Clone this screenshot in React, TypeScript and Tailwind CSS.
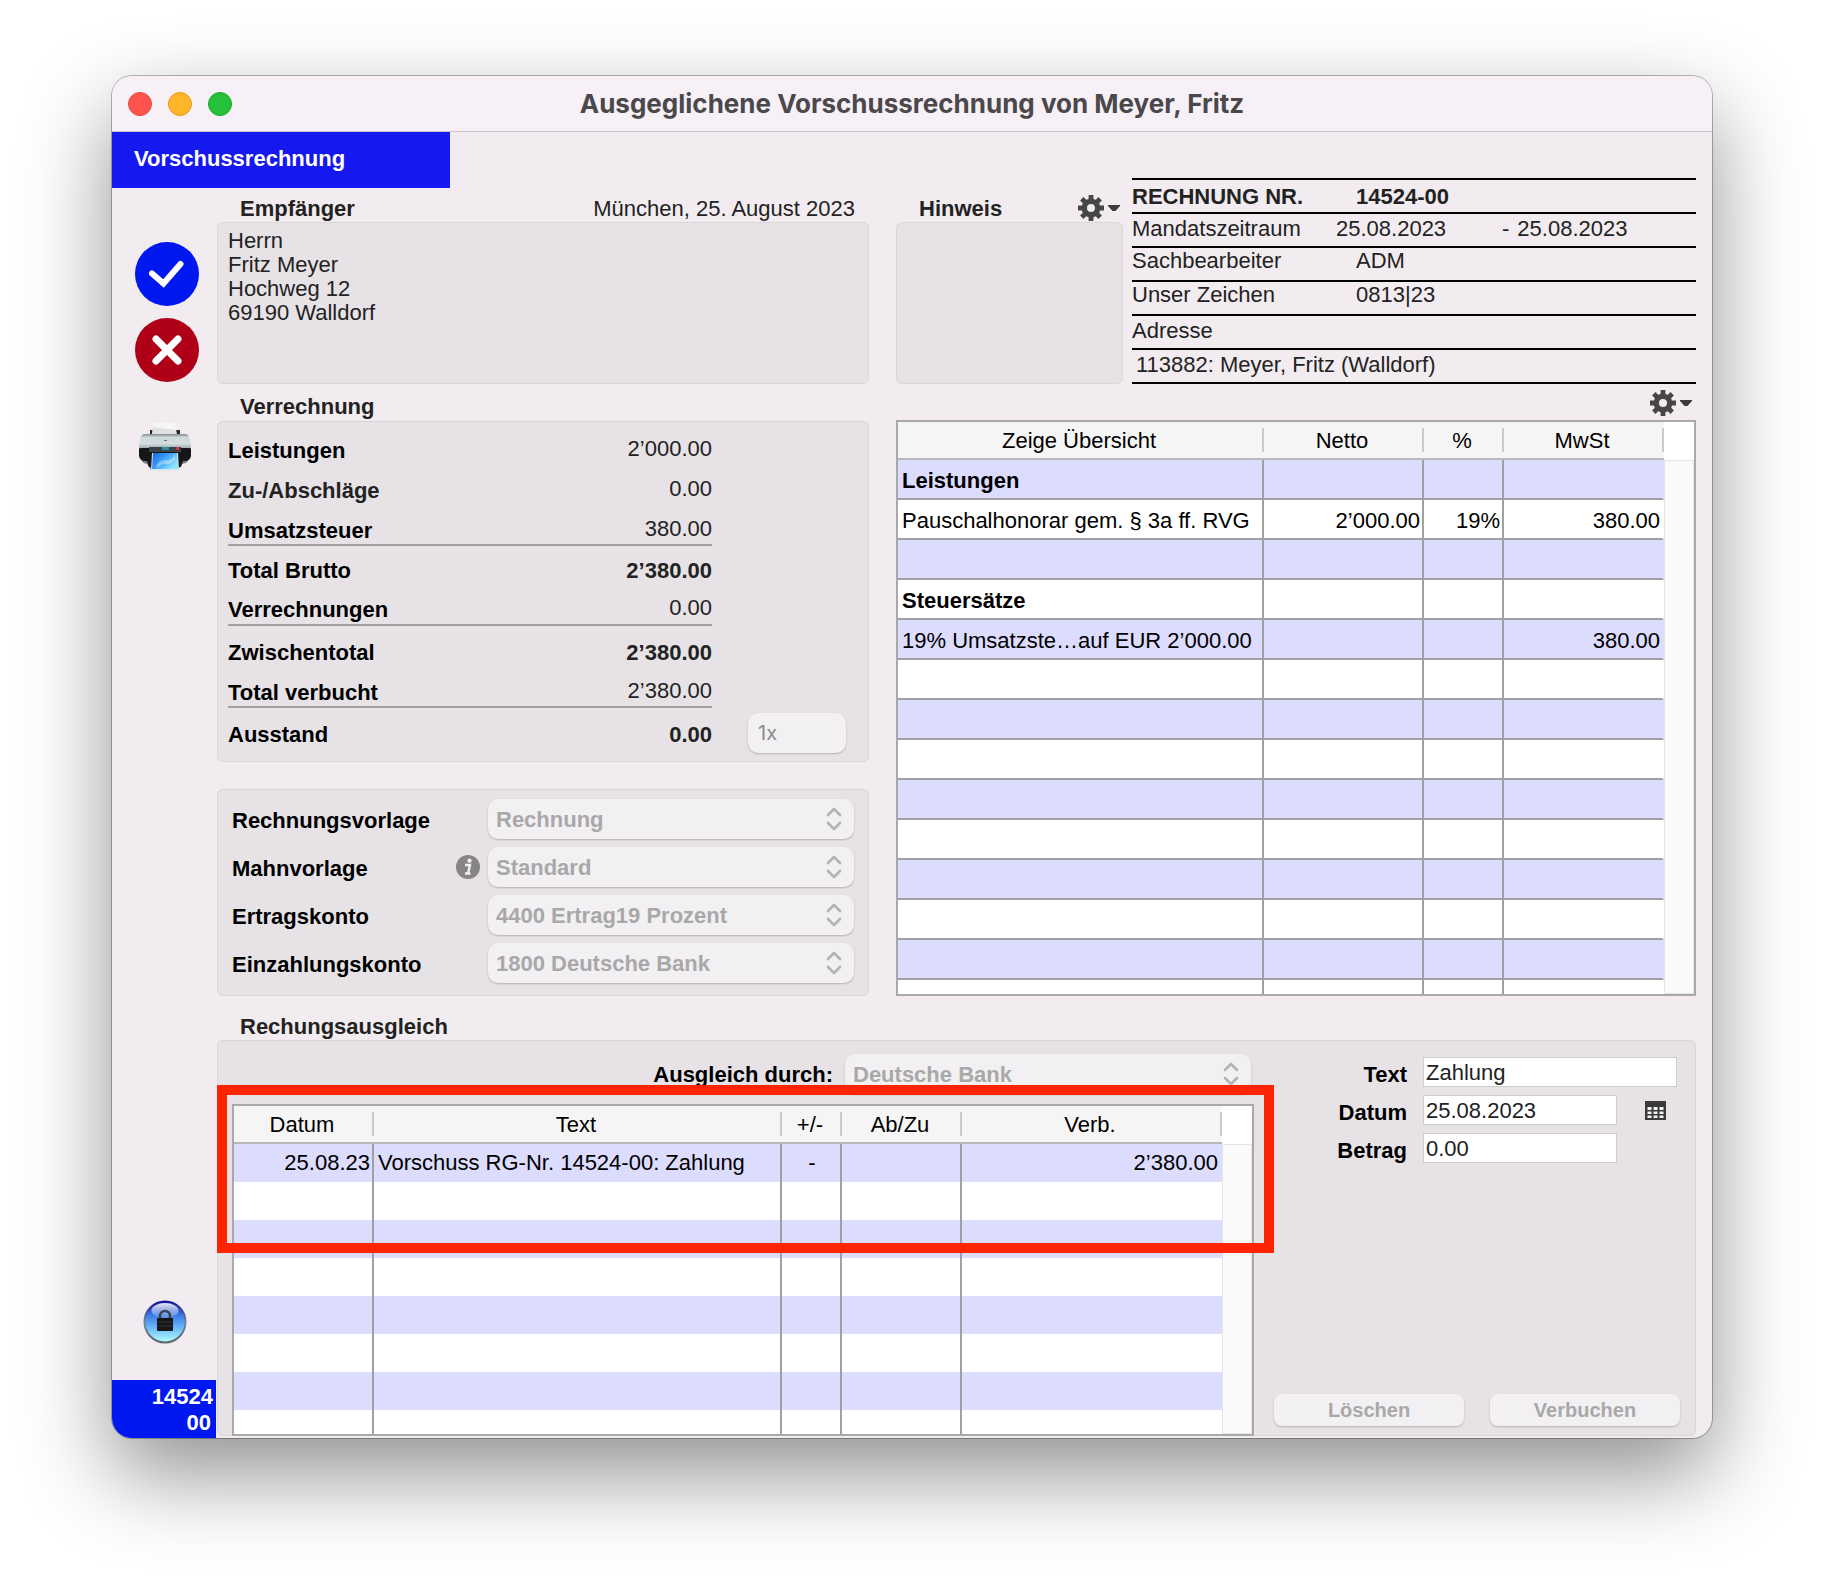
import type { ReactNode } from 'react';
import { clsx } from 'clsx';

interface Column {
  label: string;
  width?: string;
  align: string;
}

interface Row {
  cells: string[];
  bold?: boolean;
}

const overviewColumns: Column[] = [
  { label: 'Zeige Übersicht', align: 'text-left' },
  { label: 'Netto', width: 'w-[160px]', align: 'text-right' },
  { label: '%', width: 'w-[80px]', align: 'text-right' },
  { label: 'MwSt', width: 'w-[160px]', align: 'text-right' },
];

const overviewRows: Row[] = [
  { cells: ['Leistungen', '', '', ''], bold: true },
  { cells: ['Pauschalhonorar gem. § 3a ff. RVG', '2’000.00', '19%', '380.00'] },
  { cells: ['', '', '', ''] },
  { cells: ['Steuersätze', '', '', ''], bold: true },
  { cells: ['19% Umsatzste…auf EUR 2’000.00', '', '', '380.00'] },
];

const paymentColumns: Column[] = [
  { label: 'Datum', width: 'w-[140px]', align: 'text-right' },
  { label: 'Text', align: 'text-left' },
  { label: '+/-', width: 'w-[60px]', align: 'text-center' },
  { label: 'Ab/Zu', width: 'w-[120px]', align: 'text-right' },
  { label: 'Verb.', width: 'w-[260px]', align: 'text-right' },
];

const paymentRows: Row[] = [
  { cells: ['25.08.23', 'Vorschuss RG-Nr. 14524-00: Zahlung', '-', '', '2’380.00'] },
];

const totals = [
  { label: 'Leistungen', value: '2’000.00', row: 'h-10 pt-[9px]' },
  { label: 'Zu-/Abschläge', value: '0.00', row: 'h-10 pt-[9px]', muted: true },
  { label: 'Umsatzsteuer', value: '380.00', row: 'h-9 pt-[9px] border-b-2' },
  { label: 'Total Brutto', value: '2’380.00', row: 'h-11 pt-[13px]', total: true },
  { label: 'Verrechnungen', value: '0.00', row: 'h-9 pt-2 border-b-2' },
  { label: 'Zwischentotal', value: '2’380.00', row: 'h-[46px] pt-[15px]', total: true },
  { label: 'Total verbucht', value: '2’380.00', row: 'h-9 pt-[9px] border-b-2' },
  { label: 'Ausstand', value: '0.00', row: 'h-[45px] pt-[15px]', total: true },
];

const settings = [
  { id: 'rechnungsvorlage', label: 'Rechnungsvorlage', value: 'Rechnung' },
  { id: 'mahnvorlage', label: 'Mahnvorlage', value: 'Standard', info: true },
  { id: 'ertragskonto', label: 'Ertragskonto', value: '4400 Ertrag19 Prozent' },
  { id: 'einzahlungskonto', label: 'Einzahlungskonto', value: '1800 Deutsche Bank' },
];

function CheckIcon() {
  return (
    <svg className="block h-16 w-16" viewBox="0 0 64 64">
      <circle cx="32" cy="32" r="32" fill="#0018f0" />
      <path d="M17 31.500 L28.500 41.500 L45.500 22" fill="none" stroke="#fff" strokeWidth="6" strokeLinecap="round" />
    </svg>
  );
}

function CrossIcon() {
  return (
    <svg className="block h-16 w-16" viewBox="0 0 64 64">
      <circle cx="32" cy="32" r="32" fill="#b00018" />
      <path d="M21 21 L43 43 M43 21 L21 43" fill="none" stroke="#fff" strokeWidth="7" strokeLinecap="round" />
    </svg>
  );
}

function PrinterIcon() {
  return (
    <svg className="block h-[50px] w-[54px]" viewBox="0 0 54 50">
      <defs>
        <linearGradient id="printer-body" x1="0" y1="0" x2="0" y2="1">
          <stop offset="0" stopColor="#7d888c" />
          <stop offset="0.2" stopColor="#cfd9dc" />
          <stop offset="0.6" stopColor="#d3dcdf" />
          <stop offset="1" stopColor="#8d999e" />
        </linearGradient>
        <linearGradient id="printer-photo" x1="0" y1="0" x2="1" y2="0.6">
          <stop offset="0" stopColor="#0f66dd" />
          <stop offset="0.5" stopColor="#3f9ffb" />
          <stop offset="1" stopColor="#8fe6fb" />
        </linearGradient>
      </defs>
      <path d="M12 8h4v7h-4z M38 8h4v7h-4z" fill="#26292b" />
      <path d="M15 1h22l2 12H14z" fill="#f6f6f6" />
      <path d="M15 5l23 3v5H15z" fill="#dfe1e2" />
      <path d="M2 34h50q-1 7-8 8l-4 6H13l-4-6q-6-1-7-8z" fill="#7a8082" />
      <path d="M4 13q1-1 3-1h40q2 0 3 1 3 4 3 15H1q0-11 3-15z" fill="url(#printer-body)" />
      <path d="M1 27q0-1 2-1h48q2 0 2 1v7q-1 5-6 5h-2l-2 6h-3V31H14v14h-3l-2-6H7q-5 0-6-5z" fill="#141618" />
      <path d="M11 25h32v5H11z" fill="#3a4247" />
      <path d="M24 25h7v3h-7z" fill="#2c8da6" />
      <path d="M38 25h3v3h-3z" fill="#d5304a" />
      <path d="M26 18h3v1h-3z" fill="#6c777c" />
      <path d="M14 31h26l1 18H13z" fill="#dfe8ea" />
      <path d="M15 31h24l1 16H14z" fill="url(#printer-photo)" />
      <path d="M18 44q4-7 10-6t9-5v4q-4 6-9 5t-8 4z" fill="#fff" opacity="0.35" />
    </svg>
  );
}

function LockIcon() {
  return (
    <svg className="block h-11 w-11" viewBox="0 0 44 44">
      <defs>
        <linearGradient id="lock-ball" x1="0" y1="0" x2="0" y2="1">
          <stop offset="0" stopColor="#0d0f9c" />
          <stop offset="0.25" stopColor="#2f67dd" />
          <stop offset="0.6" stopColor="#62b2fb" />
          <stop offset="1" stopColor="#b6fffb" />
        </linearGradient>
        <linearGradient id="lock-shine" x1="0" y1="0" x2="0" y2="1">
          <stop offset="0" stopColor="#fff" stopOpacity="0.9" />
          <stop offset="1" stopColor="#fff" stopOpacity="0.1" />
        </linearGradient>
        <linearGradient id="lock-rim" x1="0" y1="0" x2="0" y2="1">
          <stop offset="0" stopColor="#14149c" />
          <stop offset="0.5" stopColor="#6f87a0" />
          <stop offset="1" stopColor="#5d686a" />
        </linearGradient>
      </defs>
      <circle cx="22" cy="22" r="20.500" fill="url(#lock-ball)" stroke="url(#lock-rim)" strokeWidth="2" />
      <ellipse cx="22" cy="10.500" rx="13.500" ry="7.500" fill="url(#lock-shine)" />
      <path d="M17 19v-3a5 5 0 0 1 10 0v3" fill="none" stroke="#3b4650" strokeWidth="2.600" />
      <rect x="14" y="18" width="16" height="13" rx="1" fill="#151719" />
      <path d="M15 22h14M15 26h14" stroke="#34383c" strokeWidth="1" />
    </svg>
  );
}

function GearMenu({ label }: { label: string }) {
  return (
    <button type="button" aria-label={label} className="flex h-[26px] items-center gap-1">
      <svg className="h-[26px] w-[26px]" viewBox="0 0 26 26" fill="none" stroke="#464646">
        <circle cx="13" cy="13" r="6.700" strokeWidth="5.400" />
        <g strokeWidth="4.800">
          <path d="M13 0v5M13 21v5M0 13h5M21 13h5" />
          <path d="M3.800 3.800l3.500 3.500M18.700 18.700l3.500 3.500M3.800 22.200l3.500-3.500M18.700 7.300l3.500-3.500" />
        </g>
      </svg>
      <svg className="h-[6px] w-3" viewBox="0 0 12 6">
        <path d="M0 0h12v1L7.500 6h-3L0 1z" fill="#3c3c3c" />
      </svg>
    </button>
  );
}

function InfoIcon() {
  return (
    <svg className="block h-6 w-6" viewBox="0 0 24 24">
      <circle cx="12" cy="12" r="12" fill="#868486" />
      <circle cx="13.500" cy="5.600" r="2.200" fill="#f1eff1" />
      <path d="M9 10h5l-2 8.500h2.500M9 18.500h3" fill="none" stroke="#f1eff1" strokeWidth="2.400" />
    </svg>
  );
}

function CalendarIcon() {
  return (
    <svg className="block h-[19px] w-[21px]" viewBox="0 0 21 19">
      <path d="M0 0h21v19H0z" fill="#3a3a3a" />
      <path
        d="M2.500 6h4v3h-4zM8.500 6h4v3h-4zM14.500 6h4v3h-4zM2.500 10.500h4v2.500h-4zM8.500 10.500h4v2.500h-4zM14.500 10.500h4v2.500h-4zM2.500 14.500h4v2.500h-4zM8.500 14.500h4v2.500h-4zM14.500 14.500h4v2.500h-4z"
        fill="#f4f2f4"
      />
    </svg>
  );
}

function PopupSelect({ id, value, className }: { id: string; value: string; className: string }) {
  return (
    <div className={clsx('relative', className)}>
      <select
        id={id}
        disabled
        className="block h-10 w-full appearance-none rounded-[10px] bg-[#f2f0f2] pt-0.5 pr-10 pl-2 font-bold text-[#a9a8a9] opacity-100 shadow-[0_1px_2px_rgba(0,0,0,0.22)]"
      >
        <option>{value}</option>
      </select>
      <svg
        className="pointer-events-none absolute top-2 right-3 h-6 w-4"
        viewBox="0 0 16 24"
        fill="none"
        stroke="#b4b2b4"
        strokeWidth="2.600"
        strokeLinecap="round"
        strokeLinejoin="round"
      >
        <path d="M2 8l6-6 6 6M2 16l6 6 6-6" />
      </svg>
    </div>
  );
}

function DataGrid({ columns, rows, rowCount, lined }: { columns: Column[]; rows: Row[]; rowCount: number; lined?: boolean }) {
  const allRows = Array.from({ length: rowCount }, (_, i) => rows[i] ?? { cells: columns.map(() => '') });

  return (
    <div className="flex h-full overflow-hidden border-2 border-[#aaa8aa] bg-white text-black">
      <div className="min-w-0 flex-1">
        <table className="w-full table-fixed border-separate border-spacing-0">
          <thead>
            <tr>
              {columns.map((col) => (
                <th key={col.label} className={clsx('h-[38px] border-b-2 border-[#b9b9b9] bg-[#f5f5f5] p-0 font-normal', col.width)}>
                  <div className="h-6 border-r-2 border-[#cbcbcb] pr-0.5 leading-[26px]">{col.label}</div>
                </th>
              ))}
            </tr>
          </thead>
          <tbody>
            {allRows.map((row, i) => (
              <tr key={i} className={i % 2 === 0 ? 'bg-[#dcdcff]' : 'bg-white'}>
                {columns.map((col, c) => (
                  <td
                    key={col.label}
                    className={clsx(
                      'border-r-2 border-r-[#a0a0a0] pr-0.5 pb-0 pl-1 leading-6 whitespace-nowrap last:border-r-transparent',
                      lined ? 'h-10 border-b-2 border-b-[#a0a0a0] pt-1' : 'h-[38px] pt-0',
                      row.bold && 'font-bold',
                      col.align
                    )}
                  >
                    {row.cells[c]}
                  </td>
                ))}
              </tr>
            ))}
          </tbody>
        </table>
      </div>
      <div className="flex w-[30px] flex-col pt-[38px]">
        <div className="flex-1 border border-[#e4e4e4] bg-[#fafafa]" />
      </div>
    </div>
  );
}

function Heading({ children }: { children: ReactNode }) {
  return <h2 className="pl-[23px] leading-6 font-bold text-[#222]">{children}</h2>;
}

function Sidebar() {
  return (
    <aside className="flex w-[105px] shrink-0 flex-col items-center pt-[54px]">
      <button type="button" aria-label="Bestätigen" className="ml-1">
        <CheckIcon />
      </button>
      <button type="button" aria-label="Abbrechen" className="mt-3 ml-1">
        <CrossIcon />
      </button>
      <button type="button" aria-label="Drucken" className="mt-10">
        <PrinterIcon />
      </button>
      <button type="button" aria-label="Gesperrt" className="mt-auto">
        <LockIcon />
      </button>
      <div className="mt-9 mr-px w-[104px] bg-[#0018f0] pt-1 pb-0.5 text-right leading-[26px] font-bold text-white">
        <p className="pr-[3px]">14524</p>
        <p className="pr-[5px]">00</p>
      </div>
    </aside>
  );
}

function InvoiceInfo() {
  return (
    <dl className="-mt-[10px] w-[564px] border-t-2 border-black text-[#222]">
      <div className="flex h-[34px] border-b-2 border-black pt-px leading-8 font-bold">
        <dt className="w-[224px]">RECHNUNG NR.</dt>
        <dd>14524-00</dd>
      </div>
      <div className="flex h-[34px] border-b-2 border-black pt-px leading-7">
        <dt className="w-[204px]">Mandatszeitraum</dt>
        <dd className="w-[166px]">25.08.2023</dd>
        <dd className="flex gap-2">
          <span>-</span>
          <span>25.08.2023</span>
        </dd>
      </div>
      <div className="flex h-[34px] border-b-2 border-black pt-px leading-6">
        <dt className="w-[224px]">Sachbearbeiter</dt>
        <dd>ADM</dd>
      </div>
      <div className="flex h-[34px] border-b-2 border-black pt-px leading-6">
        <dt className="w-[224px]">Unser Zeichen</dt>
        <dd>0813|23</dd>
      </div>
      <div>
        <dt className="h-[34px] border-b-2 border-black pt-px leading-7">Adresse</dt>
        <dd className="h-[34px] border-b-2 border-black pt-px pl-1 leading-7">113882: Meyer, Fritz (Walldorf)</dd>
      </div>
    </dl>
  );
}

function Settlement() {
  return (
    <section className="flex gap-5 rounded-md border border-[#d9d5d9] bg-[#e6e2e6] pt-[13px] pr-[15px] pl-[14px]">
      <div className="min-w-0 flex-1">
        <div className="flex items-center justify-end gap-3 pr-[3px]">
          <label htmlFor="ausgleich" className="pt-0.5 font-bold text-black">
            Ausgleich durch:
          </label>
          <PopupSelect id="ausgleich" value="Deutsche Bank" className="w-[406px]" />
        </div>
        <div className="relative mt-[10px] -mb-px h-[332px]">
          <DataGrid columns={paymentColumns} rows={paymentRows} rowCount={8} />
          {/* highlight frame over the first payments */}
          <div className="pointer-events-none absolute -top-[19px] -right-5 -left-[15px] h-[168px] border-[10px] border-[#ff2400]" />
        </div>
      </div>

      <form className="flex w-[406px] flex-col gap-2 pt-[3px] pb-[9px]">
        <div className="flex items-center gap-4">
          <label htmlFor="text" className="w-[133px] pt-1.5 text-right font-bold text-black">
            Text
          </label>
          <input id="text" defaultValue="Zahlung" className="h-[30px] w-[254px] border border-[#d0cdd0] bg-white pt-0.5 pl-0.5 text-[#222]" />
        </div>
        <div className="flex items-center gap-4">
          <label htmlFor="datum" className="w-[133px] pt-1.5 text-right font-bold text-black">
            Datum
          </label>
          <input id="datum" defaultValue="25.08.2023" className="h-[30px] w-[194px] border border-[#d0cdd0] bg-white pt-0.5 pl-0.5 text-[#222]" />
          <button type="button" aria-label="Kalender" className="ml-3">
            <CalendarIcon />
          </button>
        </div>
        <div className="flex items-center gap-4">
          <label htmlFor="betrag" className="w-[133px] pt-1.5 text-right font-bold text-black">
            Betrag
          </label>
          <input id="betrag" defaultValue="0.00" className="h-[30px] w-[194px] border border-[#d0cdd0] bg-white pt-0.5 pl-0.5 text-[#222]" />
        </div>
        <div className="mt-auto flex justify-between text-[20px] font-bold text-[#a9a8a9]">
          <button type="button" disabled className="h-8 w-[190px] rounded-lg bg-[#f2f0f2] shadow-[0_1px_2px_rgba(0,0,0,0.22)]">
            Löschen
          </button>
          <button type="button" disabled className="h-8 w-[190px] rounded-lg bg-[#f2f0f2] shadow-[0_1px_2px_rgba(0,0,0,0.22)]">
            Verbuchen
          </button>
        </div>
      </form>
    </section>
  );
}

export default function App() {
  return (
    <div className="min-h-screen bg-white px-28 pt-[76px] pb-[148px] font-['Liberation_Sans',Arial,sans-serif] text-[22px] leading-6">
      <div className="overflow-hidden rounded-[20px] bg-[#f2ecf0] shadow-[0_0_0_1px_rgba(0,0,0,0.28),0_36px_88px_rgba(0,0,0,0.44)]">
        <header className="flex h-14 items-center border-b border-[#c9c3c9] bg-[#f7f0f7] px-4">
          <div className="flex flex-1 gap-4">
            <button type="button" aria-label="Schließen" className="h-6 w-6 rounded-full border border-[#e2463f] bg-[#ff544d]" />
            <button type="button" aria-label="Minimieren" className="h-6 w-6 rounded-full border border-[#e09b1a] bg-[#ffb429]" />
            <button type="button" aria-label="Maximieren" className="h-6 w-6 rounded-full border border-[#1aa62b] bg-[#25c138]" />
          </div>
          <h1 className="font-[Inter,sans-serif] text-[26px] font-bold text-[#4a484a]">
            Ausgeglichene Vorschussrechnung von Meyer, Fritz
          </h1>
          <div className="flex-1" />
        </header>

        <div className="h-14 w-[338px] bg-[#1519f0] pt-[15px] pl-[22px] font-bold text-white">Vorschussrechnung</div>

        <div className="flex">
          <Sidebar />

          <main className="min-w-0 flex-1 pr-4 pb-0.5">
            <div className="grid grid-cols-[652fr_800fr] gap-x-[27px]">
              <div>
                <div className="flex h-[34px] items-end justify-between pr-[14px] pb-px">
                  <Heading>Empfänger</Heading>
                  <p className="text-[#222]">München, 25. August 2023</p>
                </div>
                <address className="min-h-[162px] rounded-md border border-[#d9d5d9] bg-[#e6e2e6] px-[10px] pt-[6px] text-[#222] not-italic">
                  Herrn
                  <br />
                  Fritz Meyer
                  <br />
                  Hochweg 12
                  <br />
                  69190 Walldorf
                </address>

                <div className="flex h-[37px] items-end pb-0.5">
                  <Heading>Verrechnung</Heading>
                </div>
                <section className="flex items-end gap-9 rounded-md border border-[#d9d5d9] bg-[#e6e2e6] pt-2 pb-2 pl-[10px]">
                  <dl className="w-[484px]">
                    {totals.map((item) => (
                      <div key={item.label} className={clsx('flex items-start justify-between border-[#a0a0a0]', item.row)}>
                        <dt className={clsx('font-bold', item.muted ? 'text-[#222]' : 'text-black')}>{item.label}</dt>
                        <dd className={clsx('text-[#222]', item.total ? 'font-bold' : 'leading-5')}>{item.value}</dd>
                      </div>
                    ))}
                  </dl>
                  <input
                    aria-label="Anzahl"
                    disabled
                    value="1x"
                    className="h-10 w-[98px] rounded-[10px] bg-[#f2f0f2] pl-[10px] font-[Inter,sans-serif] text-[20px] text-[#8b8a8b] shadow-[0_1px_2px_rgba(0,0,0,0.22)]"
                  />
                </section>

                <section className="mt-[27px] flex flex-col gap-2 rounded-md border border-[#d9d5d9] bg-[#e6e2e6] pt-[9px] pr-[14px] pb-3 pl-[14px]">
                  {settings.map((item) => (
                    <div key={item.id} className="flex items-center">
                      <label htmlFor={item.id} className="flex-1 pt-1 font-bold text-black">
                        {item.label}
                      </label>
                      {item.info && (
                        <button type="button" aria-label="Info" className="mr-2">
                          <InfoIcon />
                        </button>
                      )}
                      <PopupSelect id={item.id} value={item.value} className="w-[366px]" />
                    </div>
                  ))}
                </section>
              </div>

              <div className="flex flex-col">
                <div className="flex gap-[9px]">
                  <div className="flex flex-1 flex-col">
                    <div className="flex h-[34px] items-end justify-between pr-[3px] pb-px">
                      <Heading>Hinweis</Heading>
                      <GearMenu label="Hinweis Optionen" />
                    </div>
                    <div className="min-h-[162px] rounded-md border border-[#d9d5d9] bg-[#e6e2e6]" />
                  </div>
                  <InvoiceInfo />
                </div>
                <div className="flex h-9 items-center justify-end pt-0.5 pr-1">
                  <GearMenu label="Übersicht Optionen" />
                </div>
                <div className="h-[576px]">
                  <DataGrid columns={overviewColumns} rows={overviewRows} rowCount={14} lined />
                </div>
              </div>
            </div>

            <div className="flex h-11 items-end pb-px">
              <Heading>Rechungsausgleich</Heading>
            </div>
            <Settlement />
          </main>
        </div>
      </div>
    </div>
  );
}
